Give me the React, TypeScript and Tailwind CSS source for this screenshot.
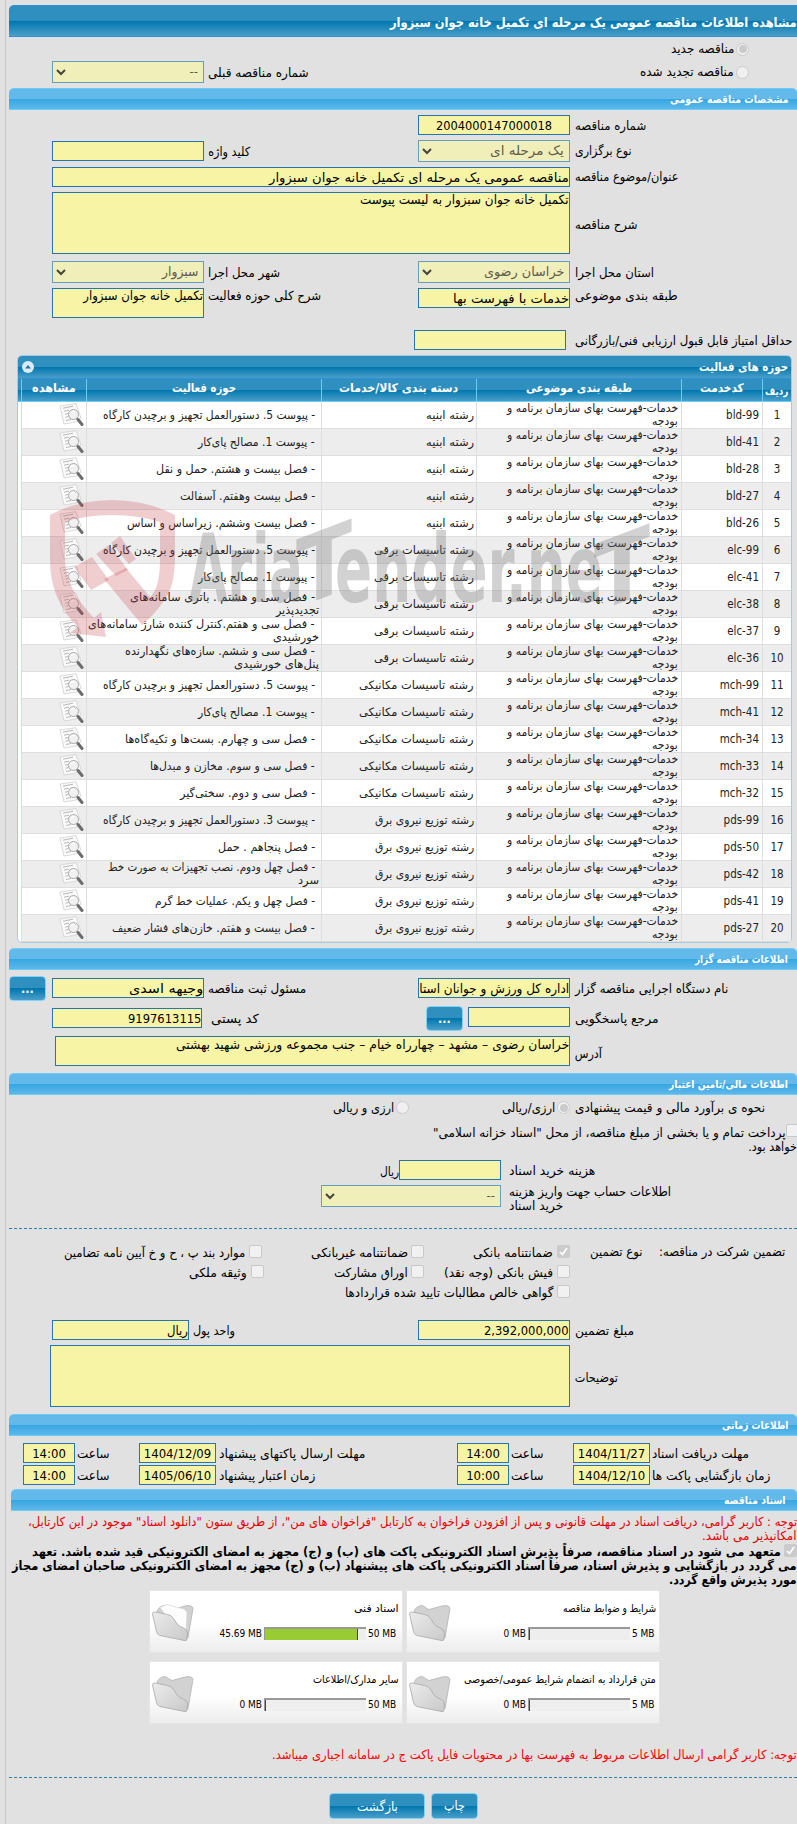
import { useLayoutEffect, useRef, type ReactNode } from 'react'

type Row = { code: string; group: string; field: string; w: number; rest?: string; restW?: number }

const abniye = 'رشته ابنیه'
const bargi = 'رشته تاسیسات برقی'
const mekaniki = 'رشته تاسیسات مکانیکی'
const niroo = 'رشته توزیع نیروی برق'

const groupWidth: Record<string, number> = { [abniye]: 48, [bargi]: 100, [mekaniki]: 115, [niroo]: 99 }

const rows: Row[] = [
  { code: 'bld-99', group: abniye, field: '- پیوست 5. دستورالعمل تجهیز و برچیدن کارگاه', w: 212 },
  { code: 'bld-41', group: abniye, field: '- پیوست 1. مصالح پای‌کار', w: 117 },
  { code: 'bld-28', group: abniye, field: '- فصل بیست و هشتم. حمل و نقل', w: 159 },
  { code: 'bld-27', group: abniye, field: '- فصل بیست وهفتم. آسفالت', w: 135 },
  { code: 'bld-26', group: abniye, field: '- فصل بیست وششم. زیراساس و اساس', w: 188 },
  { code: 'elc-99', group: bargi, field: '- پیوست 5. دستورالعمل تجهیز و برچیدن کارگاه', w: 212 },
  { code: 'elc-41', group: bargi, field: '- پیوست 1. مصالح پای‌کار', w: 117 },
  { code: 'elc-38', group: bargi, field: '- فصل سی و هشتم . باتری سامانه‌های', w: 185, rest: 'تجدیدپذیر', restW: 43 },
  { code: 'elc-37', group: bargi, field: '- فصل سی و هفتم.کنترل کننده شارژ سامانه‌های', w: 227, rest: 'خورشیدی', restW: 46 },
  { code: 'elc-36', group: bargi, field: '- فصل سی و ششم. سازه‌های نگهدارنده', w: 190, rest: 'پنل‌های خورشیدی', restW: 85 },
  { code: 'mch-99', group: mekaniki, field: '- پیوست 5. دستورالعمل تجهیز و برچیدن کارگاه', w: 212 },
  { code: 'mch-41', group: mekaniki, field: '- پیوست 1. مصالح پای‌کار', w: 117 },
  { code: 'mch-34', group: mekaniki, field: '- فصل سی و چهارم. بست‌ها و تکیه‌گاه‌ها', w: 190 },
  { code: 'mch-33', group: mekaniki, field: '- فصل سی و سوم. مخازن و مبدل‌ها', w: 165 },
  { code: 'mch-32', group: mekaniki, field: '- فصل سی و دوم. سختی‌گیر', w: 135 },
  { code: 'pds-99', group: niroo, field: '- پیوست 3. دستورالعمل تجهیز و برچیدن کارگاه', w: 212 },
  { code: 'pds-50', group: niroo, field: '- فصل پنجاهم . حمل', w: 97 },
  { code: 'pds-42', group: niroo, field: '- فصل چهل ودوم. نصب تجهیزات به صورت خط', w: 207, rest: 'سرد', restW: 21 },
  { code: 'pds-41', group: niroo, field: '- فصل چهل و یکم. عملیات خط گرم', w: 160 },
  { code: 'pds-27', group: niroo, field: '- فصل بیست و هفتم. خازن‌های فشار ضعیف', w: 203 },
]

const headers = [
  { text: 'کدخدمت', w: 44 },
  { text: 'طبقه بندی موضوعی', w: 106 },
  { text: 'دسته بندی کالا/خدمات', w: 119 },
  { text: 'حوزه فعالیت', w: 64 },
  { text: 'مشاهده', w: 44 },
]

const darkBar = 'bg-[linear-gradient(#2f90bf_0%,#2f90bf_48%,#0076ae_50%,#4a9fc8_100%)]'
const cols = 'grid grid-cols-[29px_81px_205px_155px_235px_65px]'

// stretches a run of text to the given width
function Fit({ w, children }: { w: number; children: ReactNode }) {
  const ref = useRef<HTMLSpanElement>(null)

  useLayoutEffect(() => {
    const el = ref.current
    if (el) el.style.transform = `scaleX(${w / el.offsetWidth})`
  }, [w])

  return (
    <span className="inline-block shrink-0 text-right align-top" style={{ width: w }}>
      <span ref={ref} className="inline-block origin-right align-top">{children}</span>
    </span>
  )
}

function SectionBar({ children, w, className = 'pr-[9px]' }: { children: ReactNode; w: number; className?: string }) {
  return (
    <div
      className={`h-[22px] ml-[9px] rounded-t-[5px] border-y border-[#6cccf6] bg-[linear-gradient(#63b9e9_0%,#63b9e9_48%,#37a6e1_50%,#5db8ea_100%)] text-[11px] leading-[21px] font-bold text-white ${className}`}
    >
      <Fit w={w}>{children}</Fit>
    </div>
  )
}

function Label({ children, w, className = 'w-[222px] ml-[5px]' }: { children: ReactNode; w: number; className?: string }) {
  return (
    <div className={`shrink-0 text-left ${className}`}>
      <Fit w={w}>{children}</Fit>
    </div>
  )
}

function Field({ children, className = 'w-[152px] h-5 leading-[19px]' }: { children?: ReactNode; className?: string }) {
  return (
    <div className={`shrink-0 overflow-hidden border border-[#2577a9] bg-[#f7f5a5] text-[13px] ${className}`}>
      {children}
    </div>
  )
}

function Select({ children, className = 'w-[152px]' }: { children: ReactNode; className?: string }) {
  return (
    <div
      className={`flex h-[22px] shrink-0 items-center justify-between border border-[#659fbe] bg-[#f0eeb9] pr-[5px] pl-[3px] text-[13px] text-[#5c5c4c] ${className}`}
    >
      <span>{children}</span>
      <svg width="10" height="7" viewBox="0 0 10 7" fill="none" stroke="#45453c" strokeWidth="2">
        <path d="M1 1l4 4 4-4" />
      </svg>
    </div>
  )
}

function Radio({ checked = false }) {
  return (
    <div className="flex size-[13px] shrink-0 items-center justify-center rounded-full border border-[#cbcbcb] bg-[#f0f0f0]">
      {checked && <div className="size-[8px] rounded-full bg-[#cbcbcb]" />}
    </div>
  )
}

function Check({ checked = false }) {
  return (
    <div
      className={`size-[13px] shrink-0 rounded-[2px] border ${checked ? 'border-[#cbcbcb] bg-[#cbcbcb]' : 'border-[#c9c9c9] bg-[#f1f1f1]'}`}
    >
      {checked && (
        <svg width="11" height="11" viewBox="0 0 11 11" fill="none" stroke="#fff" strokeWidth="1.7">
          <path d="M2 6l2.5 2.5L9 2" />
        </svg>
      )}
    </div>
  )
}

function Button({ children, className }: { children: ReactNode; className: string }) {
  return (
    <div className={`shrink-0 rounded-[4px] border border-[#7fd3f7] text-center text-white ${darkBar} ${className}`}>
      {children}
    </div>
  )
}

function ViewIcon() {
  return (
    <svg width="25" height="24" viewBox="0 0 25 24" fill="none">
      <path d="M1 3L17 .7 22 15l-5 4-12 2z" fill="#fafafa" stroke="#d0d0d0" strokeWidth=".8" />
      <path d="M4 5.200l10-2M5 8.200l5-1M6 11.200l3-.6M6.500 14.200l3-.6M7 17.500l5-1" stroke="#b8b8b8" />
      <circle cx="14.500" cy="11.500" r="5" fill="#efefef" fillOpacity=".85" stroke="#aaa" />
      <path d="M12 10q2-2.500 4-1" stroke="#fff" strokeWidth="1.300" />
      <path d="M19 16.500l4 5" stroke="#6c6c6c" strokeWidth="3" strokeLinecap="round" />
    </svg>
  )
}

function FolderIcon({ full = false }) {
  return (
    <svg width="43" height="38" viewBox="0 0 43 38">
      <defs>
        <linearGradient id="flap" x1="0" y1="0" x2="1" y2="1">
          <stop offset="0" stopColor="#ececec" />
          <stop offset="1" stopColor="#c9c9c9" />
        </linearGradient>
      </defs>
      <path d="M5 8q1-5 7-6.500 3 0 5 2.500l3 1.500 13-3.500q7-1.500 8 2.500l-5 29-3 3L14 28z" fill="#d2d2d2" stroke="#b3b3b3" strokeWidth=".8" />
      {full && <path d="M8 3.500l7-3L32 5l3 3-1 20-14-8z" fill="#fcfcfc" stroke="#d5d5d5" strokeWidth=".7" />}
      <path d="M.5 10q0-2.500 3-2l12 2.500q4 .5 6 4l4 6q2 2 6 3.500 4 1.500 4 5l-.5 6q0 2-2.500 1.500L8 31.500q-3-1-3.500-4z" fill="url(#flap)" stroke="#a8a8a8" strokeWidth=".8" />
    </svg>
  )
}

function Watermark() {
  return (
    <svg className="pointer-events-none absolute top-[495px] left-[45px]" width="610" height="150" viewBox="45 495 610 150">
      <g fill="#c43c44" fillOpacity=".25">
        <path d="M50 515Q78 500 112 500T175 515V555Q175 582 168 594Q158 612 142 625L104 579L126 568L150 597Q160 588 160 560V522Q138 515 112 515T65 522V562Q67 590 94 618L101 612L106 637L70 633L78 627Q50 600 50 560Z" />
        <path d="M74 567l18-10 17 23-18 10zM96 554l13-9 19 25-12 6zM111 543l9-7 16 23-7 5z" />
      </g>
      <g
        fill="#777"
        fillOpacity=".33"
        fontFamily="'DejaVu Sans Condensed','DejaVu Sans',sans-serif"
        fontWeight="bold"
        fontSize="94"
        direction="ltr"
      >
        <text x="189" y="602" textLength="114" lengthAdjust="spacingAndGlyphs">Aria</text>
        <text x="296" y="722" textLength="56" lengthAdjust="spacingAndGlyphs" transform="skewY(-21)">T</text>
        <text x="335" y="602" textLength="268" lengthAdjust="spacingAndGlyphs">ender.ne</text>
        <text x="594" y="841" textLength="56" lengthAdjust="spacingAndGlyphs" transform="skewY(-21)">T</text>
      </g>
    </svg>
  )
}

type DateProps = { label: string; w: number; date: string; time: string; first?: boolean }

function DateGroup({ label, w, date, time, first = false }: DateProps) {
  return (
    <>
      <Label w={w} className={first ? 'mt-[2px] w-[145px] ml-[2px]' : 'mt-[2px] w-[238px] ml-[3px]'}>{label}</Label>
      <Field className="h-5 w-[77px] text-center leading-[19px]">{date}</Field>
      <Label w={33} className="mt-[2px] ml-[2px] w-[62px]">ساعت</Label>
      <Field className="h-5 w-[52px] text-center leading-[19px]">{time}</Field>
    </>
  )
}

type CardProps = { title: string; w: number; max: string; used: string; percent: number }

function FileCard({ title, w, max, used, percent }: CardProps) {
  return (
    <div className="h-[63px] border border-[#e6e6e6] bg-[linear-gradient(#fff_55%,#ececec)] text-[11px] text-black">
      <div className="flex h-full">
        <div className="w-[199px] pr-[3px]">
          <div className="mt-[10px] leading-4">
            <Fit w={w}>{title}</Fit>
          </div>
          <div className="mt-[10px] flex h-[13px] items-center text-[10px] leading-[13px]" dir="ltr">
            <div className="grow pr-[2px] text-right">{used}</div>
            <div className="h-[13px] w-[102px] shrink-0 border-t-2 border-l border-[#999] bg-[#eee]">
              <div className="h-full border-r border-[#444] bg-[#9c3]" style={{ width: `${percent}%` }} />
            </div>
            <div className={max === '5 MB' ? 'w-[26px] shrink-0 pl-[2px]' : 'w-[33px] shrink-0 pl-[2px]'}>{max}</div>
          </div>
        </div>
        <div className="grow pt-[13px] pr-[8px]">
          <FolderIcon full={percent > 0} />
        </div>
      </div>
    </div>
  )
}

export default function App() {
  return (
    <div
      dir="rtl"
      className="relative h-[1824px] w-[797px] overflow-hidden bg-[#e1e1e1] font-['DejaVu_Sans_Condensed','DejaVu_Sans',sans-serif] text-[12.5px] leading-[14px] whitespace-nowrap text-black"
    >
      <div className="absolute top-0 left-[5px] h-full w-px bg-[#c9c9c9]" />

      <div className={`mt-[5px] ml-[9px] h-8 rounded-tl-[5px] border-y border-[#2f90dc] text-[13.5px] leading-[32px] font-bold text-white ${darkBar}`}>
        <Fit w={407}>مشاهده اطلاعات مناقصه عمومی یک مرحله ای تکمیل خانه جوان سبزوار</Fit>
      </div>

      <div className="flex h-[24px] items-center pr-[48px]">
        <Radio checked />
        <div className="mr-[2px]">
          <Fit w={63}>مناقصه جدید</Fit>
        </div>
      </div>
      <div className="flex h-[22px] items-center">
        <div className="flex w-[379px] items-center pr-[48px]">
          <Radio />
          <div className="mr-[2px]">
            <Fit w={94}>مناقصه تجدید شده</Fit>
          </div>
        </div>
        <Label w={101} className="mt-[2px] ml-[4px] w-[210px]">شماره مناقصه قبلی</Label>
        <Select>--</Select>
      </div>

      <div className="h-[5px]" />
      <SectionBar w={119}>مشخصات مناقصه عمومی</SectionBar>

      <div className="mt-[5px] flex h-5 items-center">
        <Label w={71} className="mt-[2px] ml-[5px] w-[222px]">شماره مناقصه</Label>
        <Field className="h-5 w-[152px] text-center leading-[19px]">
          <Fit w={116}>2004000147000018</Fit>
        </Field>
      </div>
      <div className="mt-[5px] flex h-[22px] items-center">
        <Label w={56}>نوع برگزاری</Label>
        <Select>
          <Fit w={74}>یک مرحله ای</Fit>
        </Select>
        <Label w={42} className="mt-[2px] ml-[4px] w-[210px]">کلید واژه</Label>
        <Field />
      </div>
      <div className="mt-[5px] flex h-5 items-center">
        <Label w={104}>عنوان/موضوع مناقصه</Label>
        <Field className="h-5 w-[518px] leading-[19px]">
          <Fit w={300}>مناقصه عمومی یک مرحله ای تکمیل خانه جوان سبزوار</Fit>
        </Field>
      </div>
      <div className="mt-[5px] flex h-[62px] items-center">
        <Label w={62} className="mt-[3px] ml-[5px] w-[222px]">شرح مناقصه</Label>
        <Field className="h-[62px] w-[518px] leading-[14px]">
          <Fit w={209}>تکمیل خانه جوان سبزوار به لیست پیوست</Fit>
        </Field>
      </div>
      <div className="mt-[7px] flex h-[22px] items-center">
        <Label w={79} className="mt-[2px] ml-[5px] w-[222px]">استان محل اجرا</Label>
        <Select>
          <Fit w={80}>خراسان رضوی</Fit>
        </Select>
        <Label w={72} className="mt-[2px] ml-[4px] w-[210px]">شهر محل اجرا</Label>
        <Select>
          <Fit w={36}>سبزوار</Fit>
        </Select>
      </div>
      <div className="mt-[5px] flex h-[30px] items-start">
        <Label w={103} className="mt-px ml-[5px] w-[222px]">طبقه بندی موضوعی</Label>
        <Field>
          <Fit w={116}>خدمات با فهرست بها</Fit>
        </Field>
        <Label w={113} className="mt-px ml-[4px] w-[210px]">شرح کلی حوزه فعالیت</Label>
        <Field className="h-[30px] w-[152px] leading-[14px]">
          <Fit w={120}>تکمیل خانه جوان سبزوار</Fit>
        </Field>
      </div>
      <div className="mt-[12px] flex h-5 items-center">
        <Label w={217} className="mt-[2px] ml-[9px] w-[222px]">حداقل امتیاز قابل قبول ارزیابی فنی/بازرگانی</Label>
        <Field />
      </div>

      <div className="mt-[5px] mr-[5px] ml-[17px] h-[588px] overflow-hidden rounded-[5px] border border-[#a4cbe3] bg-white text-[11.5px] text-[#222]">
        <div className={`flex h-[22px] items-center justify-between pr-[3px] pl-[4px] text-[12px] font-bold text-white ${darkBar}`}>
          <Fit w={89}>حوزه های فعالیت</Fit>
          <svg width="12" height="12" viewBox="0 0 12 12">
            <circle cx="6" cy="6" r="6" fill="#dcebfa" />
            <path d="M3 7.500l3-3.500 3 3.500z" fill="#2c6f9c" />
          </svg>
        </div>
        <div className={`h-6 border-t border-b border-t-[#3090dc] border-b-[#6cccf6] text-center text-[12px] leading-[19px] font-bold text-white ${cols} ${darkBar}`}>
          <div className="border-l border-[#6cccf6] pt-[3px] text-[11px]">
            <Fit w={23}>ردیف</Fit>
          </div>
          {headers.map((h) => (
            <div key={h.text} className="border-l border-[#6cccf6]">
              <Fit w={h.w}>{h.text}</Fit>
            </div>
          ))}
        </div>
        {rows.map((row, i) => (
          <div key={row.code} className={`h-[27px] items-stretch leading-[13px] ${cols}`}>
            {[
              <div className="w-full text-center">{i + 1}</div>,
              <div className="pr-[3px]" dir="ltr">{row.code}</div>,
              <div className="pr-[3px]">
                <div>
                  <Fit w={171}>خدمات-فهرست بهای سازمان برنامه و</Fit>
                </div>
                <Fit w={26}>بودجه</Fit>
              </div>,
              <div className="pr-[2px]">
                <Fit w={groupWidth[row.group]}>{row.group}</Fit>
              </div>,
              <div className="pr-[2px]">
                <div className="pr-[4px]">
                  <Fit w={row.w}>{row.field}</Fit>
                </div>
                {row.rest && <Fit w={row.restW ?? 0}>{row.rest}</Fit>}
              </div>,
              <div className="pr-[2px]">
                <ViewIcon />
              </div>,
            ].map((cell, j) => (
              <div key={j} className={`flex items-center border-b border-l border-[#dedede] ${i % 2 ? 'bg-[#eeedee]' : 'bg-white'}`}>
                {cell}
              </div>
            ))}
          </div>
        ))}
      </div>

      <div className="h-[5px]" />
      <SectionBar w={93}>اطلاعات مناقصه گزار</SectionBar>

      <div className="mt-[5px] flex h-[26px] items-center">
        <Label w={153} className="mt-[2px] ml-[5px] w-[222px]">نام دستگاه اجرایی مناقصه گزار</Label>
        <Field>
          <Fit w={238}>اداره کل ورزش و جوانان استان خراسان رضوی</Fit>
        </Field>
        <Label w={98} className="mt-[2px] ml-[4px] w-[210px]">مسئول ثبت مناقصه</Label>
        <Field>
          <Fit w={74}>وجیهه اسدی</Fit>
        </Field>
        <Button className="mr-[6px] h-[25px] w-[37px] leading-[24px] font-bold">...</Button>
      </div>
      <div className="mt-[4px] flex h-[26px] items-center">
        <Label w={84} className="mt-[2px] ml-[5px] w-[222px]">مرجع پاسخگویی</Label>
        <Field className="mb-[3px] h-5 w-[102px]" />
        <Button className="mr-[5px] h-[25px] w-[37px] leading-[24px] font-bold">...</Button>
        <Label w={48} className="mt-[2px] ml-[9px] w-[215px]">کد پستی</Label>
        <Field className="h-5 w-[150px] leading-[19px]">
          <Fit w={73}>9197613115</Fit>
        </Field>
      </div>
      <div className="mt-[5px] flex h-[30px] items-center">
        <Label w={27} className="mt-[6px] ml-[5px] w-[222px]">آدرس</Label>
        <Field className="h-[30px] w-[515px] leading-[15px]">
          <Fit w={393}>خراسان رضوی – مشهد – چهارراه خیام – جنب مجموعه ورزشی شهید بهشتی</Fit>
        </Field>
      </div>

      <div className="h-[7px]" />
      <SectionBar w={119}>اطلاعات مالی/تامین اعتبار</SectionBar>

      <div className="flex h-[25px] items-center">
        <Label w={190}>نحوه ی برآورد مالی و قیمت پیشنهادی</Label>
        <Radio checked />
        <div className="mr-[2px] w-[146px]">
          <Fit w={53}>ارزی/ریالی</Fit>
        </div>
        <Radio />
        <div className="mr-[2px]">
          <Fit w={61}>ارزی و ریالی</Fit>
        </div>
      </div>
      <div className="mt-[4px] flex h-[16px] items-start">
        <div className="-mr-[2px]">
          <Check />
        </div>
        <div className="pt-[2px]">
          <Fit w={353}>پرداخت تمام و یا بخشی از مبلغ مناقصه، از محل "اسناد خزانه اسلامی"</Fit>
        </div>
      </div>
      <div>
        <Fit w={49}>خواهد بود.</Fit>
      </div>

      <div className="mt-[6px] flex h-5 items-center">
        <Label w={86} className="mt-[2px] ml-[8px] w-[288px]">هزینه خرید اسناد</Label>
        <Field className="h-5 w-[102px]" />
        <div className="mt-[3px]">
          <Fit w={19}>ریال</Fit>
        </div>
      </div>
      <div className="mt-[5px] flex h-[28px] items-start">
        <div className="w-[288px] pr-[126px]">
          <Fit w={162}>اطلاعات حساب جهت واریز هزینه</Fit>
          <div className="text-left">
            <Fit w={54}>خرید اسناد</Fit>
          </div>
        </div>
        <Select className="mr-[8px] w-[180px]">--</Select>
      </div>

      <div className="mt-[15px] ml-[9px] h-px bg-[repeating-linear-gradient(90deg,#2a7fae_0_3px,transparent_3px_5px)]" />

      <div className="mt-[12px] flex h-5 items-center pr-[12px]">
        <div className="mt-[2px] w-[142px]">
          <Fit w={126}>تضمین شرکت در مناقصه:</Fit>
        </div>
        <div className="mt-[2px] w-[73px]">
          <Fit w={53}>نوع تضمین</Fit>
        </div>
        <Check checked />
        <div className="mt-[4px] mr-[4px] w-[129px]">
          <Fit w={80}>ضمانتنامه بانکی</Fit>
        </div>
        <Check />
        <div className="mt-[4px] mr-[3px] w-[146px]">
          <Fit w={97}>ضمانتنامه غیربانکی</Fit>
        </div>
        <Check />
        <div className="mt-[4px] mr-[4px]">
          <Fit w={181}>موارد بند پ ، ح و خ آیین نامه تضامین</Fit>
        </div>
      </div>
      <div className="flex h-5 items-center pr-[227px]">
        <Check />
        <div className="mt-[4px] mr-[4px] w-[129px]">
          <Fit w={109}>فیش بانکی (وجه نقد)</Fit>
        </div>
        <Check />
        <div className="mt-[4px] mr-[3px] w-[144px]">
          <Fit w={74}>اوراق مشارکت</Fit>
        </div>
        <Check />
        <div className="mt-[4px] mr-[4px]">
          <Fit w={58}>وثیقه ملکی</Fit>
        </div>
      </div>
      <div className="flex h-5 items-center pr-[227px]">
        <Check />
        <div className="mt-[4px] mr-[4px]">
          <Fit w={208}>گواهی خالص مطالبات تایید شده قراردادها</Fit>
        </div>
      </div>

      <div className="mt-[19px] flex h-5 items-center">
        <Label w={59} className="mt-[2px] ml-[5px] w-[222px]">مبلغ تضمین</Label>
        <Field>
          <Fit w={85}>2,392,000,000</Fit>
        </Field>
        <Label w={42} className="mt-[2px] ml-[4px] w-[225px]">واحد پول</Label>
        <Field className="h-5 w-[137px] leading-[19px]">
          <Fit w={21}>ریال</Fit>
        </Field>
      </div>
      <div className="mt-[5px] flex h-[62px] items-center">
        <Label w={43} className="mt-[4px] ml-[5px] w-[222px]">توضیحات</Label>
        <Field className="h-[62px] w-[520px]" />
      </div>

      <div className="h-[7px]" />
      <SectionBar w={66}>اطلاعات زمانی</SectionBar>

      <div className="mt-[7px] flex h-5 items-center">
        <DateGroup first label="مهلت دریافت اسناد" w={97} date="1404/11/27" time="14:00" />
        <DateGroup label="مهلت ارسال پاکتهای پیشنهاد" w={147} date="1404/12/09" time="14:00" />
      </div>
      <div className="mt-[2px] flex h-5 items-center">
        <DateGroup first label="زمان بازگشایی پاکت ها" w={118} date="1404/12/10" time="10:00" />
        <DateGroup label="زمان اعتبار پیشنهاد" w={96} date="1405/06/10" time="14:00" />
      </div>

      <div className="h-[4px]" />
      <div className="pl-[2px]">
        <SectionBar w={62} className="rounded-tr-[5px] pr-[11px]">اسناد مناقصه</SectionBar>
      </div>

      <div className="mt-[4px] text-[#e60000]">
        <div>
          <Fit w={769}>توجه : کاربر گرامی، دریافت اسناد در مهلت قانونی و پس از افزودن فراخوان به کارتابل "فراخوان های من"، از طریق ستون "دانلود اسناد" موجود در این کارتابل،</Fit>
        </div>
        <div>
          <Fit w={95}>امکانپذیر می باشد.</Fit>
        </div>
      </div>
      <div className="mt-px text-[12.5px] font-bold">
        <div className="flex h-[15px] items-center">
          <div className="mb-[3px]">
            <Check checked />
          </div>
          <div className="mr-[3px]">
            <Fit w={749}>متعهد می شود در اسناد مناقصه، صرفاً پذیرش اسناد الکترونیکی پاکت های (ب) و (ج) مجهز به امضای الکترونیکی قید شده باشد. تعهد</Fit>
          </div>
        </div>
        <div>
          <Fit w={785}>می گردد در بازگشایی و پذیرش اسناد، صرفاً اسناد الکترونیکی پاکت های پیشنهاد (ب) و (ج) مجهز به امضای الکترونیکی صاحبان امضای مجاز</Fit>
        </div>
        <div>
          <Fit w={128}>مورد پذیرش واقع گردد.</Fit>
        </div>
      </div>

      <div className="mt-[3px] grid grid-cols-[254px_254px] gap-x-[3px] gap-y-[8px] pr-[137px]">
        <FileCard title="شرایط و ضوابط مناقصه" w={93} max="5 MB" used="0 MB" percent={0} />
        <FileCard title="اسناد فنی" w={45} max="50 MB" used="45.69 MB" percent={92} />
        <FileCard title="متن قرارداد به انضمام شرایط عمومی/خصوصی" w={192} max="5 MB" used="0 MB" percent={0} />
        <FileCard title="سایر مدارک/اطلاعات" w={86} max="50 MB" used="0 MB" percent={0} />
      </div>

      <div className="mt-[24px] text-[#f00]">
        <Fit w={525}>توجه: کاربر گرامی ارسال اطلاعات مربوط به فهرست بها در محتویات فایل پاکت ج در سامانه اجباری میباشد.</Fit>
      </div>

      <div className="mt-[15px] ml-[9px] h-px bg-[repeating-linear-gradient(90deg,#2a7fae_0_3px,transparent_3px_5px)]" />

      <div className="mt-[15px] flex pr-[319px] text-[13px]">
        <Button className="h-[26px] w-[47px] leading-[23px]">
          <Fit w={21}>چاپ</Fit>
        </Button>
        <Button className="mr-[6px] h-[26px] w-[96px] leading-[25px]">
          <Fit w={41}>بازگشت</Fit>
        </Button>
      </div>

      <Watermark />
    </div>
  )
}
